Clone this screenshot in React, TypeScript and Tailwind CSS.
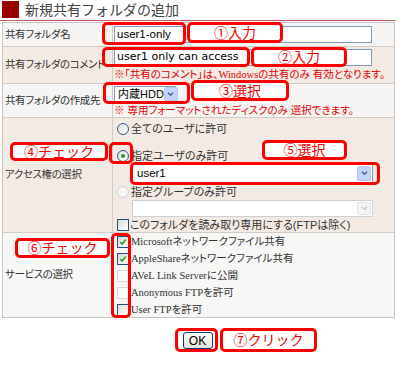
import React from 'react';

// Red call-out frame laid over the form
function Tag({ className, children }: { className: string; children?: React.ReactNode }) {
  return (
    <div
      className={`absolute flex items-center justify-center rounded-[5px] border-[3px] border-[#ff0000] text-[14px] leading-none text-[#ee0000] [font-feature-settings:normal] ${className}`}
    >
      {children}
    </div>
  );
}

function Radio({ checked = false, disabled = false }: { checked?: boolean; disabled?: boolean }) {
  return (
    <span
      className={`flex h-[12px] w-[12px] shrink-0 items-center justify-center rounded-full border ${
        disabled ? 'border-[#d0d0d0] bg-[#f4f4f4]' : 'border-[#2f5a8a] bg-gradient-to-br from-[#dcdcd6] to-white'
      }`}
    >
      {checked && <span className="h-[4px] w-[4px] rounded-full bg-[#21a121]" />}
    </span>
  );
}

function Check({ checked = false, disabled = false }: { checked?: boolean; disabled?: boolean }) {
  return (
    <span
      className={`flex h-[12px] w-[12px] shrink-0 items-center justify-center border ${
        disabled ? 'border-[#d8d8d8] bg-white' : 'border-[#1c5180] bg-gradient-to-br from-[#dcdcd6] to-white'
      }`}
    >
      {checked && (
        <svg viewBox="0 0 10 10" className="h-[8px] w-[8px]">
          <path d="M1.5 5 L4 7.5 L8.5 2" fill="none" stroke="#21a121" strokeWidth={2} />
        </svg>
      )}
    </span>
  );
}

function Arrow({ disabled = false }: { disabled?: boolean }) {
  return (
    <span
      className={`flex h-full w-[14px] shrink-0 items-center justify-center rounded-[2px] border ${
        disabled ? 'border-[#e0e0e0] bg-[#f4f4f4]' : 'border-[#b5c8f0] bg-[#c3d3fd]'
      }`}
    >
      <svg viewBox="0 0 8 6" className="h-[5px] w-[7px]">
        <path d="M1 1 L4 4 L7 1" fill="none" stroke={disabled ? '#c8c8c8' : '#4d6185'} strokeWidth={1.6} />
      </svg>
    </span>
  );
}

export default function App() {
  const serif = "font-['Liberation_Serif','Noto_Sans_CJK_JP',serif]";
  const label = 'flex w-[110px] items-center border-r border-[#d4ccc4] pl-[2px] tracking-[-0.4px]';
  return (
    <div className="relative h-[365px] w-[400px] overflow-hidden whitespace-nowrap bg-white font-['Liberation_Sans','Noto_Sans_CJK_JP',sans-serif] text-[10.5px] text-[#333] [font-feature-settings:'palt']">
      {/* title */}
      <div className="flex h-[21px] w-[396px] items-end border-b border-[#c86060] pl-[2px]">
        <div className="mb-[2px] h-[17px] w-[17px] bg-[#990000]" />
        <div className="mb-[1px] ml-[6px] text-[14px] leading-[18px] text-[#444] [font-feature-settings:normal]">新規共有フォルダの追加</div>
      </div>

      {/* form table */}
      <div className="ml-[2px] mt-[1px] w-[393px] border border-[#c8c4c0]">
        <div className="flex h-[23px] bg-[#f6f5f3]">
          <div className={label}>共有フォルダ名</div>
          <div className="flex flex-1 items-center pl-[1px]">
            <div className="flex h-[17px] w-[258px] items-center border border-[#7f9db9] bg-white pl-[2px] text-[11.5px] text-black">
              user1-only
            </div>
          </div>
        </div>

        <div className="flex h-[37px] border-t border-[#d4ccc4] bg-[#f3ebe3]">
          <div className={label}>共有フォルダのコメント</div>
          <div className="flex flex-1 flex-col pl-[1px] pt-[2px]">
            <div className="flex h-[17px] w-[258px] items-center border border-[#7f9db9] bg-white pl-[2px] font-['DejaVu_Sans',sans-serif] text-[11px] text-black">
              user1 only can access
            </div>
            <div className="mt-[2px] text-[10.5px] leading-[13px] text-[#e00000]">
              ※「共有のコメント」は、<span className={serif}>Windows</span>の共有のみ 有効となります。
            </div>
          </div>
        </div>

        <div className="flex h-[34px] border-t border-[#d4ccc4] bg-[#f6f5f3]">
          <div className={label}>共有フォルダの作成先</div>
          <div className="flex flex-1 flex-col pl-[1px] pt-[2px]">
            <div className="flex h-[16px] w-[62px] items-center justify-between border border-[#7f9db9] bg-white pl-[3px] text-[11px] text-black">
              内蔵HDD
              <Arrow />
            </div>
            <div className="mt-[2px] text-[10.5px] leading-[13px] text-[#e00000]">※ 専用フォーマットされたディスクのみ 選択できます。</div>
          </div>
        </div>

        <div className="flex h-[115px] border-t border-[#d4ccc4] bg-[#f3ebe3]">
          <div className={label}>アクセス権の選択</div>
          <div className="flex flex-1 flex-col pl-[4px] pt-[4px] text-[11px]">
            <div className="flex h-[14px] items-center gap-[2px]">
              <Radio />
              <span>全てのユーザに許可</span>
            </div>
            <div className="mt-[13px] flex h-[14px] items-center gap-[2px]">
              <Radio checked />
              <span>指定ユーザのみ許可</span>
            </div>
            <div className="ml-[15px] mt-[1px] flex h-[19px] w-[241px] items-center justify-between border border-[#7f9db9] bg-white py-[1px] pl-[4px] pr-[1px] text-[11.5px] text-black">
              user1
              <Arrow />
            </div>
            <div className="mt-[2px] flex h-[14px] items-center gap-[2px]">
              <Radio disabled />
              <span>指定グループのみ許可</span>
            </div>
            <div className="ml-[15px] mt-[1px] flex h-[17px] w-[241px] items-center justify-end border border-[#c8d0d8] bg-white py-[1px] pr-[1px]">
              <Arrow disabled />
            </div>
            <div className="mt-[1px] flex h-[14px] items-center gap-[1px]">
              <Check />
              <span>このフォルダを読み取り専用にする(FTPは除く)</span>
            </div>
          </div>
        </div>

        <div className="flex h-[85px] border-t border-[#d4ccc4] bg-[#f7f7f6]">
          <div className={label}>サービスの選択</div>
          <div className={`flex flex-1 flex-col gap-[3px] pl-[4px] pt-[2px] text-[10.5px] ${serif}`}>
            <div className="flex h-[14px] items-center gap-[2px]">
              <Check checked />
              <span>Microsoftネットワークファイル共有</span>
            </div>
            <div className="flex h-[14px] items-center gap-[2px]">
              <Check checked />
              <span>AppleShareネットワークファイル共有</span>
            </div>
            <div className="flex h-[14px] items-center gap-[2px]">
              <Check disabled />
              <span>AVeL Link Serverに公開</span>
            </div>
            <div className="flex h-[14px] items-center gap-[2px]">
              <Check disabled />
              <span>Anonymous FTPを許可</span>
            </div>
            <div className="flex h-[14px] items-center gap-[2px]">
              <Check />
              <span>User FTPを許可</span>
            </div>
          </div>
        </div>
      </div>

      <div className="mt-[14px] flex justify-center pr-[5px]">
        <button className="h-[17px] w-[30px] rounded-[3px] border border-[#003c74] bg-gradient-to-b from-white to-[#e6e3d6] text-[12px] leading-none text-black">
          OK
        </button>
      </div>

      {/* call-outs */}
      <Tag className="left-[102px] top-[22px] h-[23px] w-[84px]" />
      <Tag className="left-[187px] top-[22px] h-[21px] w-[96px] bg-white">①入力</Tag>
      <Tag className="left-[102px] top-[47px] h-[20px] w-[148px]" />
      <Tag className="left-[251px] top-[47px] h-[20px] w-[96px] bg-white">②入力</Tag>
      <Tag className="left-[103px] top-[82px] h-[22px] w-[87px]" />
      <Tag className="left-[191px] top-[80px] h-[21px] w-[98px] bg-white">③選択</Tag>
      <Tag className="left-[10px] top-[142px] h-[19px] w-[98px] bg-white">④チェック</Tag>
      <Tag className="left-[109px] top-[142px] h-[22px] w-[24px]" />
      <Tag className="left-[130px] top-[162px] h-[23px] w-[250px]" />
      <Tag className="left-[262px] top-[140px] h-[20px] w-[85px] bg-white">⑤選択</Tag>
      <Tag className="left-[15px] top-[238px] h-[20px] w-[95px] bg-white">⑥チェック</Tag>
      <Tag className="left-[111px] top-[233px] h-[85px] w-[20px]" />
      <Tag className="left-[175px] top-[328px] h-[24px] w-[43px]" />
      <Tag className="left-[220px] top-[328px] h-[24px] w-[97px] bg-white">⑦クリック</Tag>
    </div>
  );
}
